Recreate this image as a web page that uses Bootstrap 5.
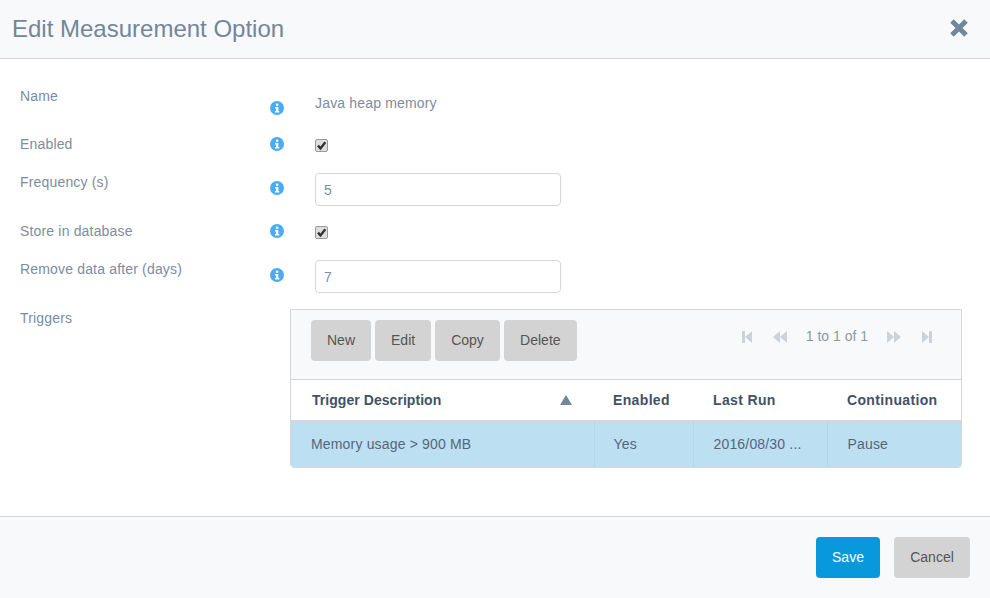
<!DOCTYPE html>
<html lang="en">
<head>
  <meta charset="UTF-8">
  <meta name="viewport" content="width=device-width, initial-scale=1">
  <title>Edit Measurement Option</title>
  <link href="https://cdn.jsdelivr.net/npm/bootstrap@5.3.3/dist/css/bootstrap.min.css" rel="stylesheet">
  <style>
    html, body { height: 598px; overflow: hidden; }
    body { font-family: "Liberation Sans", Arial, sans-serif; font-size: 14px; letter-spacing: .17px; color: #7d8c9f; background: #fff; }
    .dlg-head { height: 59px; background: #f8f9fb; border-bottom: 1px solid #d5d6d9; padding: 0 21px 0 12px; }
    .dlg-title { font-size: 24px; font-weight: 400; letter-spacing: 0; color: #72869b; margin: 0 0 2px; line-height: 55px; }
    .dlg-close { background: none; border: 0; padding: 0; line-height: 0; margin-top: -3px; }
    .dlg-body { height: 457px; padding-top: 28px; }
    .opt-row { display: flex; }
    .opt-label { width: 270px; padding-left: 20px; line-height: 18px; margin: 0; flex: none; }
    .opt-info { width: 45px; flex: none; line-height: 0; }
    .opt-name { height: 45px; }
    .opt-name .opt-info { padding-top: 14px; }
    .opt-name .opt-value { padding-top: 7px; line-height: 18px; }
    .opt-check { height: 24px; align-items: center; margin-bottom: 17px; }
    .opt-input-row { height: 33px; margin-bottom: 13px; }
    .opt-input-row .opt-info { padding-top: 8px; }
    .opt-last { margin-bottom: 16px; }
    .opt-box { width: 246px; height: 33px; border: 1px solid #d6d7d9; border-radius: 4px; padding: 0 8px; font-size: 14px; color: #7d8c9f; box-shadow: none; }
    .opt-tick, .opt-tick:checked { width: 13px; height: 13px; margin: 2px 0 0; border: 1px solid #999; border-radius: 2px; background-color: #dedede; background-size: 11px 11px; background-image: url("data:image/svg+xml,%3csvg xmlns='http://www.w3.org/2000/svg' viewBox='0 0 11 11'%3e%3cpath fill='none' stroke='%23333' stroke-width='2.4' d='M2 5.6 4.5 8.4 9.3 2.2'/%3e%3c/svg%3e"); }
    .trig-label { width: 290px; padding-left: 20px; line-height: 18px; flex: none; }
    .trig-panel { width: 672px; height: 159px; border: 1px solid #d5d6d9; border-radius: 0 0 4px 4px; overflow: hidden; }
    .trig-tools { height: 70px; background: #f8f9fb; border-bottom: 1px solid #d5d6d9; padding: 10px 20px 0; }
    .gray-btn { background: #d3d3d3; color: #555; border: 0; border-radius: 4px; height: 41px; font-size: 14px; padding: 0 16px; }
    .gray-btn:hover { background: #d3d3d3; color: #555; }
    .gray-wide { width: 73px; padding: 0; }
    .save-btn { background: #0898dc; color: #fff; border: 0; border-radius: 4px; height: 41px; width: 64px; font-size: 14px; padding: 0; }
    .save-btn:hover { background: #0898dc; color: #fff; }
    .cancel-btn { width: 76px; padding: 0; }
    .trig-pager { color: #8a99aa; height: 33px; padding-right: 9px; }
    .trig-pager svg { fill: #ccd2d9; display: block; }
    .pager-text { margin: 0 19px; line-height: 33px; letter-spacing: 0; }
    .pager-edge-l { margin-right: 21px; }
    .pager-edge-r { margin-right: 21px; }
    .trig-table { table-layout: fixed; margin: 0; width: 670px; }
    .trig-table > thead > tr > th { height: 41px; padding: 0 0 0 20px; border-bottom: 2px solid #d5d6d9; color: #3f5269; font-size: 14px; letter-spacing: .35px; vertical-align: middle; background: #fff; box-shadow: none; }
    .trig-table > thead > tr > th:first-child { padding-left: 21px; letter-spacing: .05px; }
    .trig-table > thead > tr > th:nth-child(2) { padding-left: 19px; }
    .trig-table > tbody > tr > td { height: 46px; padding: 0 0 0 20px; background: #bddff2; color: #55667a; border-bottom: 0; border-left: 1px solid #b5d6e8; vertical-align: middle; box-shadow: none; }
    .trig-table > tbody > tr > td:first-child { border-left: 0; }
    .trig-table > tbody > tr > td:nth-child(2) { padding-left: 19px; }
    .sort-mark { width: 0; height: 0; border-left: 6px solid transparent; border-right: 6px solid transparent; border-bottom: 10px solid #72869b; margin-right: 22px; }
    .dlg-foot { height: 82px; background: #f8f9fb; border-top: 1px solid #d5d6d9; padding: 20px 20px 0 0; gap: 14px; }
  </style>
</head>
<body>
  <svg class="d-none">
    <symbol id="info" viewBox="0 0 14 14">
      <circle cx="7" cy="7" r="7" fill="#4aabf7"/>
      <rect x="5.9" y="2.6" width="2.4" height="2.2" fill="#fff"/>
      <path fill="#fff" d="M5 6h3.3v4h1v1.5H5V10h1V7.4H5z"/>
    </symbol>
  </svg>

  <div class="dlg-head d-flex justify-content-between align-items-center">
    <h1 class="dlg-title">Edit Measurement Option</h1>
    <button class="dlg-close" type="button" aria-label="Close">
      <svg width="20" height="20" viewBox="0 0 20 20"><path d="M3 3 17 17M17 3 3 17" stroke="#72869b" stroke-width="5" fill="none"/></svg>
    </button>
  </div>

  <div class="dlg-body">
    <div class="opt-row opt-name">
      <label class="opt-label">Name</label>
      <div class="opt-info"><svg width="14" height="14"><use href="#info"/></svg></div>
      <div class="opt-value">Java heap memory</div>
    </div>
    <div class="opt-row opt-check">
      <label class="opt-label">Enabled</label>
      <div class="opt-info"><svg width="14" height="14"><use href="#info"/></svg></div>
      <input class="form-check-input opt-tick" type="checkbox" checked>
    </div>
    <div class="opt-row opt-input-row">
      <label class="opt-label">Frequency (s)</label>
      <div class="opt-info"><svg width="14" height="14"><use href="#info"/></svg></div>
      <input class="form-control opt-box" type="text" value="5">
    </div>
    <div class="opt-row opt-check">
      <label class="opt-label">Store in database</label>
      <div class="opt-info"><svg width="14" height="14"><use href="#info"/></svg></div>
      <input class="form-check-input opt-tick" type="checkbox" checked>
    </div>
    <div class="opt-row opt-input-row opt-last">
      <label class="opt-label">Remove data after (days)</label>
      <div class="opt-info"><svg width="14" height="14"><use href="#info"/></svg></div>
      <input class="form-control opt-box" type="text" value="7">
    </div>
    <div class="d-flex">
      <div class="trig-label">Triggers</div>
      <div class="trig-panel">
        <div class="trig-tools d-flex justify-content-between align-items-start">
          <div class="d-flex gap-1">
            <button class="btn gray-btn" type="button">New</button>
            <button class="btn gray-btn" type="button">Edit</button>
            <button class="btn gray-btn" type="button">Copy</button>
            <button class="btn gray-btn gray-wide" type="button">Delete</button>
          </div>
          <div class="trig-pager d-flex align-items-center">
            <svg class="pager-edge-l" width="10" height="14" viewBox="0 0 10 14"><path d="M0 1h3v12H0zM10 1v12L3 7z"/></svg>
            <svg width="14" height="14" viewBox="0 0 14 14"><path d="M7 1v12L0 7zM14 1v12L7 7z"/></svg>
            <span class="pager-text">1 to 1 of 1</span>
            <svg class="pager-edge-r" width="14" height="14" viewBox="0 0 14 14"><path d="M0 1v12l7-6zM7 1v12l7-6z"/></svg>
            <svg width="10" height="14" viewBox="0 0 10 14"><path d="M7 1h3v12H7zM0 1v12l7-6z"/></svg>
          </div>
        </div>
        <table class="table trig-table">
          <colgroup>
            <col style="width:303px"><col style="width:99px"><col style="width:134px"><col style="width:134px">
          </colgroup>
          <thead>
            <tr>
              <th><div class="d-flex justify-content-between align-items-center">Trigger Description <span class="sort-mark"></span></div></th>
              <th>Enabled</th>
              <th>Last Run</th>
              <th>Continuation</th>
            </tr>
          </thead>
          <tbody>
            <tr>
              <td>Memory usage &gt; 900 MB</td>
              <td>Yes</td>
              <td>2016/08/30 ...</td>
              <td>Pause</td>
            </tr>
          </tbody>
        </table>
      </div>
    </div>
  </div>

  <div class="dlg-foot d-flex justify-content-end">
    <button class="btn save-btn" type="button">Save</button>
    <button class="btn gray-btn cancel-btn" type="button">Cancel</button>
  </div>
  <script src="https://cdn.jsdelivr.net/npm/bootstrap@5.3.3/dist/js/bootstrap.bundle.min.js"></script>
</body>
</html>
